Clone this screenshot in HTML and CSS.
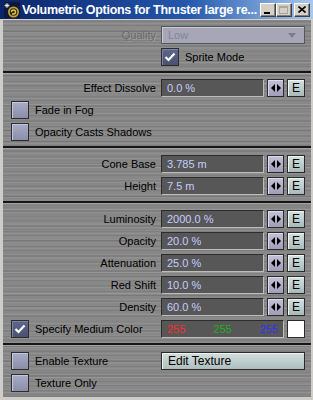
FILE: index.html
```html
<!DOCTYPE html>
<html lang="en">
<head>
  <meta charset="UTF-8" />
  <title>Volumetric Options</title>
  <link rel="stylesheet" href="styles.css">
</head>
<body>

<div class="window">
  <div class="titlebar">
    <svg class="app-icon" width="16" height="16" viewBox="0 0 16 16">
      <rect width="16" height="16" fill="#10183a"/>
      <circle cx="9.5" cy="10" r="5.5" fill="#c9a22a"/>
      <circle cx="9.5" cy="10" r="3.8" fill="#2a2a20"/>
      <path d="M7.5 10a2 2 0 1 1 2 2h-1.5" stroke="#e8c84a" stroke-width="1.4" fill="none"/>
      <path d="M3 1v5M0.5 3.5h5M1.3 1.8l3.4 3.4M4.7 1.8l-3.4 3.4" stroke="#ffffff" stroke-width="0.8"/>
    </svg>
    <span class="title">Volumetric Options for Thruster large re...</span>
    <div class="caption-btns">
      <span class="cap min"><i></i></span>
      <span class="cap max"><i></i></span>
      <span class="cap close">
        <svg width="8" height="7" viewBox="0 0 8 7"><path d="M0.5 0.5l7 6M7.5 0.5l-7 6" stroke="#000" stroke-width="1.6"/></svg>
      </span>
    </div>
  </div>

  <div class="panel">
    <!-- quality -->
    <div class="group g1">
      <div class="row">
        <span class="lbl disabled">Quality</span>
        <div class="select">
          <span>Low</span>
          <svg width="8" height="5" viewBox="0 0 8 5"><path d="M0 0h8L4 5z" fill="#7c7c90"/></svg>
        </div>
      </div>
      <div class="row">
        <span></span>
        <div class="check on"><span class="box"><svg width="12" height="10" viewBox="0 0 12 10"><path d="M1.5 5l3 3 6-6.5" stroke="#fff" stroke-width="2.2" fill="none"/></svg></span>Sprite Mode</div>
      </div>
    </div>

    <!-- dissolve / fog -->
    <div class="group g2">
      <div class="row">
        <span class="lbl">Effect Dissolve</span>
        <div class="ctrl">
          <div class="field">0.0 %</div>
          <span class="btn arrows"><svg width="10" height="8" viewBox="0 0 10 8"><path d="M4 0L0 4l4 4zM6 0l4 4-4 4z" fill="#000"/></svg></span>
          <span class="btn env">E</span>
        </div>
      </div>
      <div class="row">
        <div class="check left"><span class="box"></span>Fade in Fog</div>
      </div>
      <div class="row">
        <div class="check left"><span class="box"></span>Opacity Casts Shadows</div>
      </div>
    </div>

    <!-- cone -->
    <div class="group g3">
      <div class="row">
        <span class="lbl">Cone Base</span>
        <div class="ctrl">
          <div class="field">3.785 m</div>
          <span class="btn arrows"><svg width="10" height="8" viewBox="0 0 10 8"><path d="M4 0L0 4l4 4zM6 0l4 4-4 4z" fill="#000"/></svg></span>
          <span class="btn env">E</span>
        </div>
      </div>
      <div class="row">
        <span class="lbl">Height</span>
        <div class="ctrl">
          <div class="field">7.5 m</div>
          <span class="btn arrows"><svg width="10" height="8" viewBox="0 0 10 8"><path d="M4 0L0 4l4 4zM6 0l4 4-4 4z" fill="#000"/></svg></span>
          <span class="btn env">E</span>
        </div>
      </div>
    </div>

    <!-- light values -->
    <div class="group g4">
      <div class="row">
        <span class="lbl">Luminosity</span>
        <div class="ctrl">
          <div class="field">2000.0 %</div>
          <span class="btn arrows"><svg width="10" height="8" viewBox="0 0 10 8"><path d="M4 0L0 4l4 4zM6 0l4 4-4 4z" fill="#000"/></svg></span>
          <span class="btn env">E</span>
        </div>
      </div>
      <div class="row">
        <span class="lbl">Opacity</span>
        <div class="ctrl">
          <div class="field">20.0 %</div>
          <span class="btn arrows"><svg width="10" height="8" viewBox="0 0 10 8"><path d="M4 0L0 4l4 4zM6 0l4 4-4 4z" fill="#000"/></svg></span>
          <span class="btn env">E</span>
        </div>
      </div>
      <div class="row">
        <span class="lbl">Attenuation</span>
        <div class="ctrl">
          <div class="field">25.0 %</div>
          <span class="btn arrows"><svg width="10" height="8" viewBox="0 0 10 8"><path d="M4 0L0 4l4 4zM6 0l4 4-4 4z" fill="#000"/></svg></span>
          <span class="btn env">E</span>
        </div>
      </div>
      <div class="row">
        <span class="lbl">Red Shift</span>
        <div class="ctrl">
          <div class="field">10.0 %</div>
          <span class="btn arrows"><svg width="10" height="8" viewBox="0 0 10 8"><path d="M4 0L0 4l4 4zM6 0l4 4-4 4z" fill="#000"/></svg></span>
          <span class="btn env">E</span>
        </div>
      </div>
      <div class="row">
        <span class="lbl">Density</span>
        <div class="ctrl">
          <div class="field">60.0 %</div>
          <span class="btn arrows"><svg width="10" height="8" viewBox="0 0 10 8"><path d="M4 0L0 4l4 4zM6 0l4 4-4 4z" fill="#000"/></svg></span>
          <span class="btn env">E</span>
        </div>
      </div>
      <div class="row">
        <div class="check left on"><span class="box"><svg width="12" height="10" viewBox="0 0 12 10"><path d="M1.5 5l3 3 6-6.5" stroke="#fff" stroke-width="2.2" fill="none"/></svg></span>Specify Medium Color</div>
        <div class="ctrl">
          <div class="field rgb"><span class="r">255</span><span class="g">255</span><span class="b">255</span></div>
          <span class="swatch"></span>
        </div>
      </div>
    </div>

    <!-- texture -->
    <div class="group g5">
      <div class="row">
        <div class="check left"><span class="box"></span>Enable Texture</div>
        <span class="btn wide">Edit Texture</span>
      </div>
      <div class="row">
        <div class="check left"><span class="box"></span>Texture Only</div>
      </div>
    </div>
  </div>
</div>

</body>
</html>
```

FILE: styles.css
```css
html, body {
  margin: 0;
  padding: 0;
}

body {
  width: 313px;
  height: 400px;
  overflow: hidden;
  font-family: "Liberation Sans", Arial, sans-serif;
  font-size: 11px;
  color: #000;
}

.window {
  width: 313px;
  height: 400px;
  box-sizing: border-box;
  background: #c8c6c2;
  border-left: 3px solid #cfcdc8;
  border-right: 2px solid #cfcdc8;
  border-bottom: 3px solid #cfcdc8;
}

/* title bar */
.titlebar {
  height: 19px;
  margin-left: -3px;
  margin-right: -2px;
  padding-left: 4px;
  display: flex;
  align-items: center;
  background: linear-gradient(90deg, #0a246a 0%, #2458ac 60%, #a6caf0 100%);
  border-bottom: 1px solid #d4d0c8;
}

.app-icon {
  flex: none;
  margin-right: 2px;
}

.title {
  flex: 1;
  color: #fff;
  font-weight: bold;
  font-size: 12.5px;
  letter-spacing: -0.3px;
  white-space: nowrap;
  overflow: hidden;
}

.caption-btns {
  display: flex;
  margin-right: 3px;
}

.cap {
  width: 16px;
  height: 14px;
  box-sizing: border-box;
  background: #d4d0c8;
  border: 1px solid;
  border-color: #fff #404040 #404040 #fff;
  box-shadow: inset -1px -1px 0 #808080;
  display: flex;
  align-items: center;
  justify-content: center;
}

.cap.close {
  margin-left: 2px;
}

.cap.min i {
  width: 6px;
  height: 2px;
  background: #000;
  margin-top: 6px;
  margin-right: 2px;
}

.cap.max i {
  width: 9px;
  height: 8px;
  box-sizing: border-box;
  border: 1px solid #a8a6a0;
  border-top-width: 2px;
  margin-right: 1px;
}

/* panel */
.panel {
  background:
    repeating-linear-gradient(180deg, rgba(255,255,255,0.07) 0 1px, transparent 1px 3px),
    repeating-linear-gradient(180deg, rgba(0,0,0,0.07) 0 2px, transparent 2px 5px),
    repeating-linear-gradient(180deg, rgba(255,255,255,0.05) 0 1px, transparent 1px 7px),
    repeating-linear-gradient(180deg, rgba(0,0,0,0.05) 0 1px, transparent 1px 11px),
    #888888;
}

.group {
  display: flex;
  flex-direction: column;
  gap: 4px;
  padding: 6px 0 5px;
  border-bottom: 2px solid #161616;
  border-top: 1px solid #a2a2a2;
}

.g1 { border-top: none; }
.g2 { padding: 5px 0 5px; }
.g3 { padding: 6px 0 6px; }
.g5 { border-bottom: none; }

.row {
  display: grid;
  grid-template-columns: 153px 144px;
  column-gap: 5px;
  height: 18px;
  align-items: center;
}

.lbl {
  text-align: right;
  white-space: nowrap;
}

.lbl.disabled {
  color: #6a6a6a;
  text-shadow: 1px 1px 0 rgba(255,255,255,0.2);
}

.select {
  height: 18px;
  box-sizing: border-box;
  background: #a6a6b6;
  border: 1px solid #55555f;
  box-shadow: inset 1px 1px 0 #cacad6;
  color: #84849a;
  display: flex;
  align-items: center;
  justify-content: space-between;
  padding: 0 8px 0 6px;
}

.ctrl {
  display: flex;
  gap: 3px;
  height: 18px;
}

.field {
  flex: 1;
  box-sizing: border-box;
  height: 18px;
  background: #575757;
  border: 1px solid;
  border-color: #2c2c2c #bdbdbd #bdbdbd #2c2c2c;
  color: #c6ccff;
  padding-left: 5px;
  line-height: 16px;
}

.field.rgb {
  display: flex;
  justify-content: space-between;
  padding-right: 5px;
}

.field .r { color: #ff2a2a; }
.field .g { color: #20b020; }
.field .b { color: #3030ff; }

.btn {
  flex: none;
  width: 18px;
  height: 18px;
  box-sizing: border-box;
  border: 1px solid #2a2a2a;
  display: flex;
  align-items: center;
  justify-content: center;
}

.btn.arrows {
  width: 17px;
  background: linear-gradient(180deg, #c4c2d8, #a09eb8);
  box-shadow: inset 1px 1px 0 #dcdaec;
}

.btn.env {
  background: linear-gradient(180deg, #d4e2e0, #a8bab8);
  box-shadow: inset 1px 1px 0 #eef6f4;
  font-size: 12px;
}

.btn.wide {
  width: 144px;
  justify-content: flex-start;
  padding-left: 6px;
  font-size: 12px;
  background: linear-gradient(180deg, #d2dede, #aebebe);
  box-shadow: inset 1px 1px 0 #eef4f4;
}

.swatch {
  flex: none;
  width: 18px;
  height: 18px;
  box-sizing: border-box;
  background: #fff;
  border: 1px solid #2a2a2a;
}

.check {
  display: flex;
  align-items: center;
  gap: 6px;
  white-space: nowrap;
}

.check.left {
  padding-left: 8px;
}

.check .box {
  flex: none;
  width: 18px;
  height: 18px;
  box-sizing: border-box;
  border: 1px solid #2c2c2c;
  background: linear-gradient(180deg, #a8acc6, #8a8ea8);
  box-shadow: inset 1px 1px 0 #c4c8dc;
  display: flex;
  align-items: center;
  justify-content: center;
}

.check.on .box {
  background: linear-gradient(180deg, #5e668a, #4a5272);
  box-shadow: inset 1px 1px 0 #7a82a6;
}
```
